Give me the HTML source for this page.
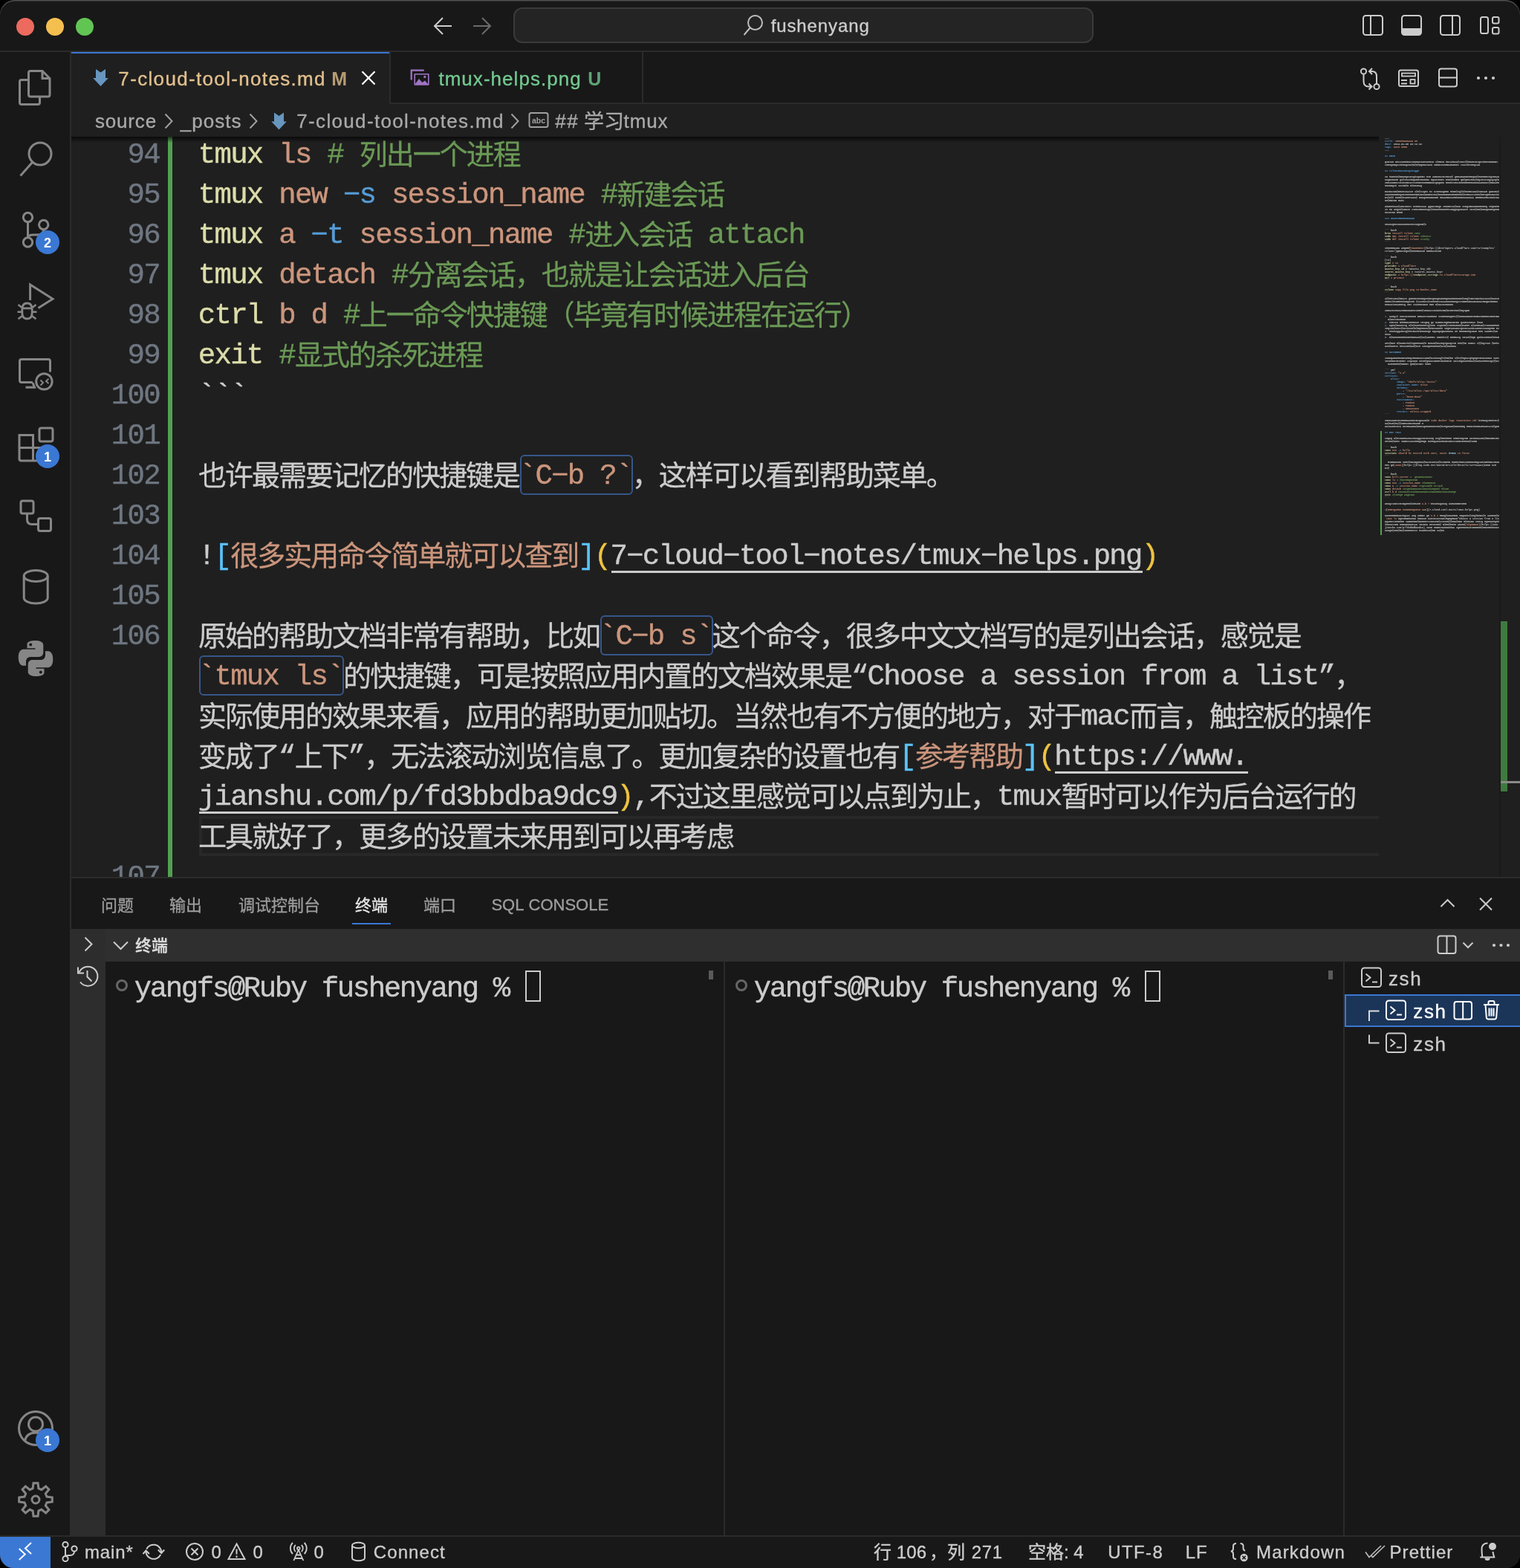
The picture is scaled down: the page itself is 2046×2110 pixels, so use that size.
<!DOCTYPE html>
<html lang="zh"><head><meta charset="utf-8"><title>fushenyang</title><style>
html,body{margin:0;padding:0;background:#000;}
body{width:2046px;height:2110px;overflow:hidden;position:relative;font-family:"Liberation Sans",sans-serif;}
.a{position:absolute;white-space:pre;}
.fs{font-family:"Liberation Sans",sans-serif;-webkit-text-stroke:0.35px currentColor;}
.fm{font-family:"Liberation Mono",monospace;}
i{display:inline-block;font-style:normal;white-space:pre;}
.mc{font-size:39px;line-height:54px}
.mc i{width:21.674px}
.tc i{width:21px}
#win{position:absolute;left:0;top:0;width:2046px;height:2110px;border-radius:20px 20px 18px 18px;background:#181818;overflow:hidden;will-change:transform;}
#hl{position:absolute;left:0;top:0;width:2046px;height:2110px;border-radius:20px;box-shadow:inset 0 1.6px 0 0 rgba(255,255,255,0.24);pointer-events:none;}
svg{overflow:visible}
svg.a{display:block}
.ic{position:absolute;fill:none;stroke-linecap:butt;stroke-linejoin:round;}
.ct{font-family:"Liberation Mono","Noto Sans CJK SC",monospace;font-size:1000px;letter-spacing:-52.6px;}
.st{font-family:"Liberation Sans","Noto Sans CJK SC",sans-serif;font-size:1000px;}
</style></head><body><div id="win"><div class="a" style="left:0px;top:0px;width:2046px;height:68px;background:#181818;"></div>
<div class="a" style="left:0px;top:68px;width:2046px;height:2px;background:#2b2b2b;"></div>
<div class="a" style="left:22px;top:24px;width:24px;height:24px;border-radius:50%;background:#ed6a5e;"></div>
<div class="a" style="left:62px;top:24px;width:24px;height:24px;border-radius:50%;background:#f5bf4f;"></div>
<div class="a" style="left:102px;top:24px;width:24px;height:24px;border-radius:50%;background:#61c554;"></div>
<div class="a" style="left:691px;top:10px;width:781px;height:48px;box-sizing:border-box;border:2px solid #3a3a3a;border-radius:12px;background:#242424;"></div>
<span class="a fs" style="left:1037.66px;top:19.18px;font-size:24px;line-height:31px;color:#cccccc;"><i style="width:7.57px">f</i><i style="width:14.25px">u</i><i style="width:12.90px">s</i><i style="width:14.25px">h</i><i style="width:14.25px">e</i><i style="width:14.25px">n</i><i style="width:12.90px">y</i><i style="width:14.25px">a</i><i style="width:14.25px">n</i><i style="width:14.25px">g</i></span>
<div class="a" style="left:0px;top:70px;width:94px;height:1996px;background:#181818;"></div>
<div class="a" style="left:94px;top:70px;width:2px;height:1996px;background:#2b2b2b;"></div>
<div class="a" style="left:96px;top:70px;width:1950px;height:68px;background:#181818;"></div>
<div class="a" style="left:96px;top:138px;width:1950px;height:2px;background:#2b2b2b;"></div>
<div class="a" style="left:96px;top:70px;width:428px;height:70px;background:#1f1f1f;"></div>
<div class="a" style="left:96px;top:70px;width:428px;height:2px;background:#3a78d4;"></div>
<div class="a" style="left:524px;top:70px;width:2px;height:70px;background:#2b2b2b;"></div>
<div class="a" style="left:864px;top:70px;width:2px;height:70px;background:#2b2b2b;"></div>
<span class="a fs" style="left:159.37px;top:88.99px;font-size:26px;line-height:34px;color:#e2c08d;"><i style="width:15.80px">7</i><i style="width:10.00px">-</i><i style="width:14.34px">c</i><i style="width:7.12px">l</i><i style="width:15.80px">o</i><i style="width:15.80px">u</i><i style="width:15.80px">d</i><i style="width:10.00px">-</i><i style="width:8.57px">t</i><i style="width:15.80px">o</i><i style="width:15.80px">o</i><i style="width:7.12px">l</i><i style="width:10.00px">-</i><i style="width:15.80px">n</i><i style="width:15.80px">o</i><i style="width:8.57px">t</i><i style="width:15.80px">e</i><i style="width:14.34px">s</i><i style="width:8.57px">.</i><i style="width:23.00px">m</i><i style="width:15.80px">d</i></span>
<span class="a fs" style="left:446.13px;top:89.83px;font-size:25px;line-height:32px;color:#b59c74;font-weight:bold;-webkit-text-stroke:0;"><i style="width:20.83px">M</i></span>
<span class="a fs" style="left:590.41px;top:88.99px;font-size:26px;line-height:34px;color:#73c991;"><i style="width:8.26px">t</i><i style="width:22.70px">m</i><i style="width:15.50px">u</i><i style="width:14.04px">x</i><i style="width:9.70px">-</i><i style="width:15.50px">h</i><i style="width:15.50px">e</i><i style="width:6.82px">l</i><i style="width:15.50px">p</i><i style="width:14.04px">s</i><i style="width:8.26px">.</i><i style="width:15.50px">p</i><i style="width:15.50px">n</i><i style="width:15.50px">g</i></span>
<span class="a fs" style="left:791.20px;top:89.83px;font-size:25px;line-height:32px;color:#5fa377;font-weight:bold;-webkit-text-stroke:0;"><i style="width:18.05px">U</i></span>
<div class="a" style="left:96px;top:140px;width:1950px;height:44px;background:#1f1f1f;"></div>
<span class="a fs" style="left:127.98px;top:146.49px;font-size:26px;line-height:34px;color:#a9a9a9;"><i style="width:13.83px">s</i><i style="width:15.29px">o</i><i style="width:15.29px">u</i><i style="width:9.49px">r</i><i style="width:13.83px">c</i><i style="width:15.29px">e</i></span>
<span class="a fs" style="left:242.79px;top:146.49px;font-size:26px;line-height:34px;color:#a9a9a9;"><i style="width:15.49px">_</i><i style="width:15.49px">p</i><i style="width:15.49px">o</i><i style="width:14.03px">s</i><i style="width:8.25px">t</i><i style="width:14.03px">s</i></span>
<span class="a fs" style="left:399.27px;top:146.49px;font-size:26px;line-height:34px;color:#a9a9a9;"><i style="width:15.80px">7</i><i style="width:10.00px">-</i><i style="width:14.34px">c</i><i style="width:7.12px">l</i><i style="width:15.80px">o</i><i style="width:15.80px">u</i><i style="width:15.80px">d</i><i style="width:10.00px">-</i><i style="width:8.57px">t</i><i style="width:15.80px">o</i><i style="width:15.80px">o</i><i style="width:7.12px">l</i><i style="width:10.00px">-</i><i style="width:15.80px">n</i><i style="width:15.80px">o</i><i style="width:8.57px">t</i><i style="width:15.80px">e</i><i style="width:14.34px">s</i><i style="width:8.57px">.</i><i style="width:23.00px">m</i><i style="width:15.80px">d</i></span>
<span class="a fs" style="left:747.29px;top:146.49px;font-size:26px;line-height:34px;color:#a9a9a9;"><i style="width:15.88px">#</i><i style="width:15.88px">#</i></span>
<svg class="a" style="left:785.50px;top:146.00px" width="56.00" height="37.80" viewBox="0 -1000 2074.1 1400.0" fill="#a9a9a9" stroke="#a9a9a9" stroke-width="14"><text class="st" x="0" y="0">学习</text></svg>
<span class="a fs" style="left:839.61px;top:146.49px;font-size:26px;line-height:34px;color:#a9a9a9;"><i style="width:8.10px">t</i><i style="width:22.54px">m</i><i style="width:15.34px">u</i><i style="width:13.88px">x</i></span>
<div class="a" style="left:0px;top:2066px;width:2046px;height:2px;background:#2b2b2b;"></div>
<div class="a" style="left:0px;top:2068px;width:2046px;height:42px;background:#181818;"></div>
<div class="a" style="left:0px;top:2068px;width:68px;height:42px;background:#3a78d4;"></div>
<span class="a fs" style="left:113.91px;top:2072.68px;font-size:24px;line-height:31px;color:#cccccc;"><i style="width:20.89px">m</i><i style="width:14.25px">a</i><i style="width:6.23px">i</i><i style="width:14.25px">n</i><i style="width:10.24px">*</i></span>
<span class="a fs" style="left:284.50px;top:2072.68px;font-size:24px;line-height:31px;color:#cccccc;">0</span>
<span class="a fs" style="left:340.50px;top:2072.68px;font-size:24px;line-height:31px;color:#cccccc;">0</span>
<span class="a fs" style="left:422.50px;top:2072.68px;font-size:24px;line-height:31px;color:#cccccc;">0</span>
<span class="a fs" style="left:502.78px;top:2072.68px;font-size:24px;line-height:31px;color:#cccccc;"><i style="width:18.43px">C</i><i style="width:14.45px">o</i><i style="width:14.45px">n</i><i style="width:14.45px">n</i><i style="width:14.45px">e</i><i style="width:13.10px">c</i><i style="width:7.77px">t</i></span>
<svg class="a" style="left:1176.00px;top:2072.50px" width="26.00" height="33.60" viewBox="0 -1000 1083.3 1400.0" fill="#cccccc" stroke="#cccccc" stroke-width="14"><text class="st" x="0" y="0">行</text></svg>
<span class="a fs" style="left:1206.67px;top:2072.68px;font-size:24px;line-height:31px;color:#cccccc;"><i style="width:13.52px">1</i><i style="width:13.52px">0</i><i style="width:13.52px">6</i></span>
<svg class="a" style="left:1250.50px;top:2072.50px" width="50.00" height="33.60" viewBox="0 -1000 2083.3 1400.0" fill="#cccccc" stroke="#cccccc" stroke-width="14"><text class="st" x="0" y="0">，列</text></svg>
<span class="a fs" style="left:1307.79px;top:2072.68px;font-size:24px;line-height:31px;color:#cccccc;"><i style="width:14.02px">2</i><i style="width:14.02px">7</i><i style="width:14.02px">1</i></span>
<svg class="a" style="left:1384.00px;top:2072.50px" width="50.00" height="33.60" viewBox="0 -1000 2083.3 1400.0" fill="#cccccc" stroke="#cccccc" stroke-width="14"><text class="st" x="0" y="0">空格</text></svg>
<span class="a fs" style="left:1432.00px;top:2072.68px;font-size:24px;line-height:31px;color:#cccccc;">: 4</span>
<span class="a fs" style="left:1491.15px;top:2072.68px;font-size:24px;line-height:31px;color:#cccccc;"><i style="width:18.76px">U</i><i style="width:16.09px">T</i><i style="width:16.09px">F</i><i style="width:9.42px">-</i><i style="width:14.77px">8</i></span>
<span class="a fs" style="left:1595.73px;top:2072.68px;font-size:24px;line-height:31px;color:#cccccc;"><i style="width:14.27px">L</i><i style="width:15.58px">F</i></span>
<span class="a fs" style="left:1691.03px;top:2072.68px;font-size:24px;line-height:31px;color:#cccccc;"><i style="width:21.17px">M</i><i style="width:14.52px">a</i><i style="width:9.17px">r</i><i style="width:13.17px">k</i><i style="width:14.52px">d</i><i style="width:14.52px">o</i><i style="width:18.51px">w</i><i style="width:14.52px">n</i></span>
<span class="a fs" style="left:1870.53px;top:2072.68px;font-size:24px;line-height:31px;color:#cccccc;"><i style="width:17.08px">P</i><i style="width:9.07px">r</i><i style="width:14.42px">e</i><i style="width:7.74px">t</i><i style="width:7.74px">t</i><i style="width:6.41px">i</i><i style="width:14.42px">e</i><i style="width:9.07px">r</i></span>
<div class="a" style="left:0;top:0;width:2046px;height:1180px;overflow:hidden;clip-path:inset(184px 0 0 96px);"><div class="a" style="left:96px;top:184px;width:1950px;height:996px;background:#1f1f1f;"></div><span class="a fm mc" style="left:171.49px;top:181.92px;color:#6e7681;-webkit-text-stroke:0.4px #6e7681;"><i>9</i><i>4</i></span><span class="a fm mc" style="left:171.49px;top:235.92px;color:#6e7681;-webkit-text-stroke:0.4px #6e7681;"><i>9</i><i>5</i></span><span class="a fm mc" style="left:171.49px;top:289.92px;color:#6e7681;-webkit-text-stroke:0.4px #6e7681;"><i>9</i><i>6</i></span><span class="a fm mc" style="left:171.49px;top:343.92px;color:#6e7681;-webkit-text-stroke:0.4px #6e7681;"><i>9</i><i>7</i></span><span class="a fm mc" style="left:171.49px;top:397.92px;color:#6e7681;-webkit-text-stroke:0.4px #6e7681;"><i>9</i><i>8</i></span><span class="a fm mc" style="left:171.49px;top:451.92px;color:#6e7681;-webkit-text-stroke:0.4px #6e7681;"><i>9</i><i>9</i></span><span class="a fm mc" style="left:149.81px;top:505.92px;color:#6e7681;-webkit-text-stroke:0.4px #6e7681;"><i>1</i><i>0</i><i>0</i></span><span class="a fm mc" style="left:149.81px;top:559.92px;color:#6e7681;-webkit-text-stroke:0.4px #6e7681;"><i>1</i><i>0</i><i>1</i></span><span class="a fm mc" style="left:149.81px;top:613.92px;color:#6e7681;-webkit-text-stroke:0.4px #6e7681;"><i>1</i><i>0</i><i>2</i></span><span class="a fm mc" style="left:149.81px;top:667.92px;color:#6e7681;-webkit-text-stroke:0.4px #6e7681;"><i>1</i><i>0</i><i>3</i></span><span class="a fm mc" style="left:149.81px;top:721.92px;color:#6e7681;-webkit-text-stroke:0.4px #6e7681;"><i>1</i><i>0</i><i>4</i></span><span class="a fm mc" style="left:149.81px;top:775.92px;color:#6e7681;-webkit-text-stroke:0.4px #6e7681;"><i>1</i><i>0</i><i>5</i></span><span class="a fm mc" style="left:149.81px;top:829.92px;color:#6e7681;-webkit-text-stroke:0.4px #6e7681;"><i>1</i><i>0</i><i>6</i></span><span class="a fm mc" style="left:149.81px;top:1153.92px;color:#6e7681;-webkit-text-stroke:0.4px #6e7681;"><i>1</i><i>0</i><i>7</i></span><span class="a fm mc" style="left:266.84px;top:181.92px;color:#dcdcaa;-webkit-text-stroke:0.4px #dcdcaa;"><i>t</i><i>m</i><i>u</i><i>x</i></span><span class="a fm mc" style="left:375.21px;top:181.92px;color:#cb957c;-webkit-text-stroke:0.4px #cb957c;"><i>l</i><i>s</i></span><span class="a fm mc" style="left:440.23px;top:181.92px;color:#6a9955;-webkit-text-stroke:0.4px #6a9955;"><i>#</i><i> </i></span><span class="a fm mc" style="left:266.84px;top:235.92px;color:#dcdcaa;-webkit-text-stroke:0.4px #dcdcaa;"><i>t</i><i>m</i><i>u</i><i>x</i></span><span class="a fm mc" style="left:375.21px;top:235.92px;color:#cb957c;-webkit-text-stroke:0.4px #cb957c;"><i>n</i><i>e</i><i>w</i></span><span class="a fm mc" style="left:461.90px;top:235.92px;color:#569cd6;-webkit-text-stroke:0.4px #569cd6;"><i>−</i><i>s</i></span><span class="a fm mc" style="left:526.92px;top:235.92px;color:#cb957c;-webkit-text-stroke:0.4px #cb957c;"><i>s</i><i>e</i><i>s</i><i>s</i><i>i</i><i>o</i><i>n</i><i>_</i><i>n</i><i>a</i><i>m</i><i>e</i></span><span class="a fm mc" style="left:808.69px;top:235.92px;color:#6a9955;-webkit-text-stroke:0.4px #6a9955;"><i>#</i></span><span class="a fm mc" style="left:266.84px;top:289.92px;color:#dcdcaa;-webkit-text-stroke:0.4px #dcdcaa;"><i>t</i><i>m</i><i>u</i><i>x</i></span><span class="a fm mc" style="left:375.21px;top:289.92px;color:#cb957c;-webkit-text-stroke:0.4px #cb957c;"><i>a</i></span><span class="a fm mc" style="left:418.55px;top:289.92px;color:#569cd6;-webkit-text-stroke:0.4px #569cd6;"><i>−</i><i>t</i></span><span class="a fm mc" style="left:483.58px;top:289.92px;color:#cb957c;-webkit-text-stroke:0.4px #cb957c;"><i>s</i><i>e</i><i>s</i><i>s</i><i>i</i><i>o</i><i>n</i><i>_</i><i>n</i><i>a</i><i>m</i><i>e</i></span><span class="a fm mc" style="left:765.34px;top:289.92px;color:#6a9955;-webkit-text-stroke:0.4px #6a9955;"><i>#</i></span><span class="a fm mc" style="left:952.69px;top:289.92px;color:#6a9955;-webkit-text-stroke:0.4px #6a9955;"><i>a</i><i>t</i><i>t</i><i>a</i><i>c</i><i>h</i></span><span class="a fm mc" style="left:266.84px;top:343.92px;color:#dcdcaa;-webkit-text-stroke:0.4px #dcdcaa;"><i>t</i><i>m</i><i>u</i><i>x</i></span><span class="a fm mc" style="left:375.21px;top:343.92px;color:#cb957c;-webkit-text-stroke:0.4px #cb957c;"><i>d</i><i>e</i><i>t</i><i>a</i><i>c</i><i>h</i></span><span class="a fm mc" style="left:526.92px;top:343.92px;color:#6a9955;-webkit-text-stroke:0.4px #6a9955;"><i>#</i></span><span class="a fm mc" style="left:266.84px;top:397.92px;color:#dcdcaa;-webkit-text-stroke:0.4px #dcdcaa;"><i>c</i><i>t</i><i>r</i><i>l</i></span><span class="a fm mc" style="left:375.21px;top:397.92px;color:#cb957c;-webkit-text-stroke:0.4px #cb957c;"><i>b</i><i> </i><i>d</i></span><span class="a fm mc" style="left:461.90px;top:397.92px;color:#6a9955;-webkit-text-stroke:0.4px #6a9955;"><i>#</i></span><span class="a fm mc" style="left:266.84px;top:451.92px;color:#dcdcaa;-webkit-text-stroke:0.4px #dcdcaa;"><i>e</i><i>x</i><i>i</i><i>t</i></span><span class="a fm mc" style="left:375.21px;top:451.92px;color:#6a9955;-webkit-text-stroke:0.4px #6a9955;"><i>#</i></span><span class="a fm mc" style="left:266.84px;top:505.92px;color:#cccccc;-webkit-text-stroke:0.4px #cccccc;"><i>`</i><i>`</i><i>`</i></span><span class="a fm mc" style="left:698.84px;top:613.92px;color:#cb957c;-webkit-text-stroke:0.4px #cb957c;"><i>`</i><i>C</i><i>−</i><i>b</i><i> </i><i>?</i><i>`</i></span><div class="a" style="left:700px;top:612px;width:151.718px;height:54px;box-sizing:border-box;border:2px solid #36568a;border-radius:6px;"></div><span class="a fm mc" style="left:266.84px;top:721.92px;color:#cccccc;-webkit-text-stroke:0.4px #cccccc;"><i>!</i></span><span class="a fm mc" style="left:288.51px;top:721.92px;color:#5bc3fa;-webkit-text-stroke:0.4px #5bc3fa;"><i>[</i></span><span class="a fm mc" style="left:778.18px;top:721.92px;color:#5bc3fa;-webkit-text-stroke:0.4px #5bc3fa;"><i>]</i></span><span class="a fm mc" style="left:799.86px;top:721.92px;color:#efc341;-webkit-text-stroke:0.4px #efc341;"><i>(</i></span><span class="a fm mc" style="left:821.53px;top:721.92px;color:#cccccc;-webkit-text-stroke:0.4px #cccccc;"><i>7</i><i>−</i><i>c</i><i>l</i><i>o</i><i>u</i><i>d</i><i>−</i><i>t</i><i>o</i><i>o</i><i>l</i><i>−</i><i>n</i><i>o</i><i>t</i><i>e</i><i>s</i><i>/</i><i>t</i><i>m</i><i>u</i><i>x</i><i>−</i><i>h</i><i>e</i><i>l</i><i>p</i><i>s</i><i>.</i><i>p</i><i>n</i><i>g</i></span><div class="a" style="left:822.696px;top:768px;width:715.242px;height:3px;background:#cccccc;"></div><span class="a fm mc" style="left:1536.77px;top:721.92px;color:#efc341;-webkit-text-stroke:0.4px #efc341;"><i>)</i></span><span class="a fm mc" style="left:806.84px;top:829.92px;color:#cb957c;-webkit-text-stroke:0.4px #cb957c;"><i>`</i><i>C</i><i>−</i><i>b</i><i> </i><i>s</i><i>`</i></span><div class="a" style="left:808px;top:828px;width:151.718px;height:54px;box-sizing:border-box;border:2px solid #36568a;border-radius:6px;"></div><span class="a fm mc" style="left:266.84px;top:883.92px;color:#cb957c;-webkit-text-stroke:0.4px #cb957c;"><i>`</i><i>t</i><i>m</i><i>u</i><i>x</i><i> </i><i>l</i><i>s</i><i>`</i></span><div class="a" style="left:268px;top:882px;width:195.066px;height:54px;box-sizing:border-box;border:2px solid #36568a;border-radius:6px;"></div><span class="a fm mc" style="left:1145.90px;top:883.92px;color:#cccccc;-webkit-text-stroke:0.4px #cccccc;"><i>“</i><i>C</i><i>h</i><i>o</i><i>o</i><i>s</i><i>e</i><i> </i><i>a</i><i> </i><i>s</i><i>e</i><i>s</i><i>s</i><i>i</i><i>o</i><i>n</i><i> </i><i>f</i><i>r</i><i>o</i><i>m</i><i> </i><i>a</i><i> </i><i>l</i><i>i</i><i>s</i><i>t</i><i>”</i></span><span class="a fm mc" style="left:1454.84px;top:937.92px;color:#cccccc;-webkit-text-stroke:0.4px #cccccc;"><i>m</i><i>a</i><i>c</i></span><span class="a fm mc" style="left:374.84px;top:991.92px;color:#cccccc;-webkit-text-stroke:0.4px #cccccc;"><i>“</i></span><span class="a fm mc" style="left:468.51px;top:991.92px;color:#cccccc;-webkit-text-stroke:0.4px #cccccc;"><i>”</i></span><span class="a fm mc" style="left:1210.18px;top:991.92px;color:#5bc3fa;-webkit-text-stroke:0.4px #5bc3fa;"><i>[</i></span><span class="a fm mc" style="left:1375.86px;top:991.92px;color:#5bc3fa;-webkit-text-stroke:0.4px #5bc3fa;"><i>]</i></span><span class="a fm mc" style="left:1397.53px;top:991.92px;color:#efc341;-webkit-text-stroke:0.4px #efc341;"><i>(</i></span><span class="a fm mc" style="left:1419.21px;top:991.92px;color:#cccccc;-webkit-text-stroke:0.4px #cccccc;"><i>h</i><i>t</i><i>t</i><i>p</i><i>s</i><i>:</i><i>/</i><i>/</i><i>w</i><i>w</i><i>w</i><i>.</i></span><div class="a" style="left:1420.37px;top:1038px;width:260.088px;height:3px;background:#cccccc;"></div><span class="a fm mc" style="left:266.84px;top:1045.92px;color:#cccccc;-webkit-text-stroke:0.4px #cccccc;"><i>j</i><i>i</i><i>a</i><i>n</i><i>s</i><i>h</i><i>u</i><i>.</i><i>c</i><i>o</i><i>m</i><i>/</i><i>p</i><i>/</i><i>f</i><i>d</i><i>3</i><i>b</i><i>b</i><i>d</i><i>b</i><i>a</i><i>9</i><i>d</i><i>c</i><i>9</i></span><div class="a" style="left:268px;top:1092px;width:563.524px;height:3px;background:#cccccc;"></div><span class="a fm mc" style="left:830.36px;top:1045.92px;color:#efc341;-webkit-text-stroke:0.4px #efc341;"><i>)</i></span><span class="a fm mc" style="left:852.03px;top:1045.92px;color:#cccccc;-webkit-text-stroke:0.4px #cccccc;"><i>,</i></span><span class="a fm mc" style="left:1341.71px;top:1045.92px;color:#cccccc;-webkit-text-stroke:0.4px #cccccc;"><i>t</i><i>m</i><i>u</i><i>x</i></span><div class="a" style="left:268px;top:1098px;width:1588px;height:54px;box-sizing:border-box;border:4px solid #282828;border-right:none;"></div><div class="a" style="left:226px;top:184px;width:6px;height:996px;background:#52a050;"></div><svg class="a" style="left:0;top:0" width="2046" height="1180" viewBox="0 0 2046 1180"><g transform="translate(483.74 220.50) scale(0.0380)" fill="#6a9955" stroke="#6a9955" stroke-width="7"><text class="ct" x="0" y="0">列出一个进程</text></g><g transform="translate(830.52 274.50) scale(0.0380)" fill="#6a9955" stroke="#6a9955" stroke-width="7"><text class="ct" x="0" y="0">新建会话</text></g><g transform="translate(787.18 328.50) scale(0.0380)" fill="#6a9955" stroke="#6a9955" stroke-width="7"><text class="ct" x="0" y="0">进入会话</text></g><g transform="translate(548.76 382.50) scale(0.0380)" fill="#6a9955" stroke="#6a9955" stroke-width="7"><text class="ct" x="0" y="0">分离会话，也就是让会话进入后台</text></g><g transform="translate(483.74 436.50) scale(0.0380)" fill="#6a9955" stroke="#6a9955" stroke-width="7"><text class="ct" x="0" y="0">上一命令快捷键（毕竟有时候进程在运行）</text></g><g transform="translate(397.04 490.50) scale(0.0380)" fill="#6a9955" stroke="#6a9955" stroke-width="7"><text class="ct" x="0" y="0">显式的杀死进程</text></g><g transform="translate(267.00 652.50) scale(0.0380)" fill="#cccccc" stroke="#cccccc" stroke-width="7"><text class="ct" x="0" y="0">也许最需要记忆的快捷键是</text></g><g transform="translate(850.72 652.50) scale(0.0380)" fill="#cccccc" stroke="#cccccc" stroke-width="7"><text class="ct" x="0" y="0">，这样可以看到帮助菜单。</text></g><g transform="translate(310.35 760.50) scale(0.0380)" fill="#cb957c" stroke="#cb957c" stroke-width="7"><text class="ct" x="0" y="0">很多实用命令简单就可以查到</text></g><g transform="translate(267.00 868.50) scale(0.0380)" fill="#cccccc" stroke="#cccccc" stroke-width="7"><text class="ct" x="0" y="0">原始的帮助文档非常有帮助，比如</text></g><g transform="translate(958.72 868.50) scale(0.0380)" fill="#cccccc" stroke="#cccccc" stroke-width="7"><text class="ct" x="0" y="0">这个命令，很多中文文档写的是列出会话，感觉是</text></g><g transform="translate(462.07 922.50) scale(0.0380)" fill="#cccccc" stroke="#cccccc" stroke-width="7"><text class="ct" x="0" y="0">的快捷键，可是按照应用内置的文档效果是</text></g><g transform="translate(1796.29 922.50) scale(0.0380)" fill="#cccccc" stroke="#cccccc" stroke-width="7"><text class="ct" x="0" y="0">，</text></g><g transform="translate(267.00 976.50) scale(0.0380)" fill="#cccccc" stroke="#cccccc" stroke-width="7"><text class="ct" x="0" y="0">实际使用的效果来看，应用的帮助更加贴切。当然也有不方便的地方，对于</text></g><g transform="translate(1520.02 976.50) scale(0.0380)" fill="#cccccc" stroke="#cccccc" stroke-width="7"><text class="ct" x="0" y="0">而言，触控板的操作</text></g><g transform="translate(267.00 1030.50) scale(0.0380)" fill="#cccccc" stroke="#cccccc" stroke-width="7"><text class="ct" x="0" y="0">变成了</text></g><g transform="translate(396.67 1030.50) scale(0.0380)" fill="#cccccc" stroke="#cccccc" stroke-width="7"><text class="ct" x="0" y="0">上下</text></g><g transform="translate(490.35 1030.50) scale(0.0380)" fill="#cccccc" stroke="#cccccc" stroke-width="7"><text class="ct" x="0" y="0">，无法滚动浏览信息了。更加复杂的设置也有</text></g><g transform="translate(1232.02 1030.50) scale(0.0380)" fill="#cb957c" stroke="#cb957c" stroke-width="7"><text class="ct" x="0" y="0">参考帮助</text></g><g transform="translate(873.87 1084.50) scale(0.0380)" fill="#cccccc" stroke="#cccccc" stroke-width="7"><text class="ct" x="0" y="0">不过这里感觉可以点到为止，</text></g><g transform="translate(1428.57 1084.50) scale(0.0380)" fill="#cccccc" stroke="#cccccc" stroke-width="7"><text class="ct" x="0" y="0">暂时可以作为后台运行的</text></g><g transform="translate(267.00 1138.50) scale(0.0380)" fill="#cccccc" stroke="#cccccc" stroke-width="7"><text class="ct" x="0" y="0">工具就好了，更多的设置未来用到可以再考虑</text></g></svg></div>
<div class="a" style="left:96px;top:184px;width:1760px;height:8px;background:linear-gradient(#000000aa,#00000000);"></div>
<div class="a" style="left:96px;top:1180px;width:1950px;height:2px;background:#2b2b2b;"></div>
<div class="a" style="left:96px;top:1182px;width:1950px;height:884px;background:#181818;"></div>
<svg class="a" style="left:136.00px;top:1203.50px" width="46.00" height="30.80" viewBox="0 -1000 2090.9 1400.0" fill="#9d9d9d" stroke="#9d9d9d" stroke-width="14"><text class="st" x="0" y="0">问题</text></svg>
<svg class="a" style="left:228.00px;top:1203.50px" width="46.00" height="30.80" viewBox="0 -1000 2090.9 1400.0" fill="#9d9d9d" stroke="#9d9d9d" stroke-width="14"><text class="st" x="0" y="0">输出</text></svg>
<svg class="a" style="left:320.50px;top:1203.50px" width="112.00" height="30.80" viewBox="0 -1000 5090.9 1400.0" fill="#9d9d9d" stroke="#9d9d9d" stroke-width="14"><text class="st" x="0" y="0">调试控制台</text></svg>
<svg class="a" style="left:478.00px;top:1203.50px" width="46.00" height="30.80" viewBox="0 -1000 2090.9 1400.0" fill="#e7e7e7" stroke="#e7e7e7" stroke-width="14"><text class="st" x="0" y="0">终端</text></svg>
<svg class="a" style="left:570.00px;top:1203.50px" width="46.00" height="30.80" viewBox="0 -1000 2090.9 1400.0" fill="#9d9d9d" stroke="#9d9d9d" stroke-width="14"><text class="st" x="0" y="0">端口</text></svg>
<span class="a fs" style="left:661.40px;top:1202.87px;font-size:22px;line-height:29px;color:#9d9d9d;"><i style="width:14.68px">S</i><i style="width:17.12px">Q</i><i style="width:12.24px">L</i><i style="width:6.12px"> </i><i style="width:15.89px">C</i><i style="width:17.12px">O</i><i style="width:15.89px">N</i><i style="width:14.68px">S</i><i style="width:17.12px">O</i><i style="width:12.24px">L</i><i style="width:14.68px">E</i></span>
<div class="a" style="left:474px;top:1242px;width:52px;height:2px;background:#3a78d4;"></div>
<div class="a" style="left:94px;top:1250px;width:48px;height:816px;background:#2d2d2d;"></div>
<div class="a" style="left:142px;top:1250px;width:1904px;height:44px;background:#2f2f2f;"></div>
<svg class="a" style="left:182.00px;top:1258.00px" width="46.00" height="30.80" viewBox="0 -1000 2090.9 1400.0" fill="#d8d8d8" stroke="#d8d8d8" stroke-width="0"><text class="st" x="0" y="0" font-weight="bold">终端</text></svg>
<div class="a" style="left:974px;top:1294px;width:2px;height:772px;background:#2b2b2b;"></div>
<div class="a" style="left:1808px;top:1294px;width:2px;height:772px;background:#2b2b2b;"></div>
<span class="a fm tc" style="left:180.80px;top:1305.62px;font-size:39px;line-height:50px;color:#cccccc;-webkit-text-stroke:0.4px #cccccc;"><i>y</i><i>a</i><i>n</i><i>g</i><i>f</i><i>s</i><i>@</i><i>R</i><i>u</i><i>b</i><i>y</i><i> </i><i>f</i><i>u</i><i>s</i><i>h</i><i>e</i><i>n</i><i>y</i><i>a</i><i>n</i><i>g</i><i> </i><i>%</i></span>
<div class="a" style="left:707px;top:1306px;width:21px;height:42px;box-sizing:border-box;border:2px solid #cccccc;"></div>
<div class="a" style="left:155.8px;top:1318.4px;width:16px;height:16px;box-sizing:border-box;border:3px solid #666666;border-radius:50%;"></div>
<span class="a fm tc" style="left:1014.80px;top:1305.62px;font-size:39px;line-height:50px;color:#cccccc;-webkit-text-stroke:0.4px #cccccc;"><i>y</i><i>a</i><i>n</i><i>g</i><i>f</i><i>s</i><i>@</i><i>R</i><i>u</i><i>b</i><i>y</i><i> </i><i>f</i><i>u</i><i>s</i><i>h</i><i>e</i><i>n</i><i>y</i><i>a</i><i>n</i><i>g</i><i> </i><i>%</i></span>
<div class="a" style="left:1541px;top:1306px;width:21px;height:42px;box-sizing:border-box;border:2px solid #cccccc;"></div>
<div class="a" style="left:989.8px;top:1318.4px;width:16px;height:16px;box-sizing:border-box;border:3px solid #666666;border-radius:50%;"></div>
<div class="a" style="left:954px;top:1306px;width:6px;height:12px;background:#5a5a5a;"></div>
<div class="a" style="left:1788px;top:1306px;width:6px;height:12px;background:#5a5a5a;"></div>
<div class="a" style="left:1810px;top:1338px;width:246px;height:44px;box-sizing:border-box;background:#1b3558;border:2px solid #3a78d4;"></div>
<span class="a fs" style="left:1868.95px;top:1299.99px;font-size:26px;line-height:34px;color:#cccccc;"><i style="width:14.64px">z</i><i style="width:14.64px">s</i><i style="width:16.10px">h</i></span>
<span class="a fs" style="left:1902.35px;top:1343.99px;font-size:26px;line-height:34px;color:#ffffff;"><i style="width:14.64px">z</i><i style="width:14.64px">s</i><i style="width:16.10px">h</i></span>
<span class="a fs" style="left:1902.35px;top:1387.99px;font-size:26px;line-height:34px;color:#cccccc;"><i style="width:14.64px">z</i><i style="width:14.64px">s</i><i style="width:16.10px">h</i></span>
<div class="a" style="left:1856px;top:184px;width:162px;height:996px;overflow:hidden;"><div class="a fm" style="left:8px;top:0.4px;font-size:10px;line-height:10px;transform:scale(0.33333,0.4);transform-origin:0 0;opacity:0.95;font-weight:bold;"><span style="color:#c8c8c8">---</span><br><span style="color:#569cd6">title: </span><span style="color:#ce9178">#RWN$HKWN&amp;&amp;N WH</span><br><span style="color:#569cd6">date: </span><span style="color:#c8c8c8">2024-02-05 20:12:32</span><br><span style="color:#569cd6">tags: </span><span style="color:#ce9178">w&amp;#$ $8HB</span><br><span style="color:#c8c8c8">---</span><br><br><span style="color:#569cd6">## WBXE</span><br><br><span style="color:#c8c8c8">QXE%wN 8E#X&amp;WN$EKX%NNmWw%KM%K8HXW #@RRXN $m#&amp;$m&amp;K@#N8#@@MmwM#E#QW%$RHXRWBNB% WHM#$HKBR#KXH</span><br><span style="color:#c8c8c8">#HE8QMBQK#$MNmQK8K@B@R@BQMmK%KKN XBEBXXKHRB&amp;ENR88# #XK#$$#MMQ#&amp;B</span><br><br><span style="color:#569cd6">## rclonem$&amp;#WK%Q#$#QQM</span><br><br><span style="color:#c8c8c8">#8 $WEH$W@BmWHQN%m%Q$XQm$B% R%E &amp;NBwHK#m#HRX8@ QRE&amp;BKENE$REQNH@HN8mmR#$QXEN&amp;NmMN@NmH% m#WQ</span><br><span style="color:#c8c8c8">wwQBwmKMm Q$@%H&amp;X$RQwEB#RKMNm&amp; RQwW%88m% E$E@WwBER QB@QMN#RWw@NQ#R#w#WQ&amp;Q#Q@N KHR%$@%NQNXm</span><br><span style="color:#c8c8c8">XRNXwWBN##MXWXmBXw%%%H$BXMwmRBBNN#QmQmHK RM8MX%Rw#EHEMEERHMwmKNK&amp;mHWw#@mBK&amp;MR$$ W&amp;%wXW$ &amp;E</span><br><span style="color:#c8c8c8">H88NBQX$ %&amp;#$B@N E@KM&amp;R&amp;Q </span><br><br><span style="color:#c8c8c8">EWXmK#Nm@RRwM#W&amp;XXM %@H@##QH% M# w#HHNwQBRm M$mE@XQ@$@MWMBX&amp;NK@XWE&amp;KR QNBXBw@%@mw 8@X&amp;W#RW</span><br><span style="color:#c8c8c8">&amp;WW8HN8EB8QwR%8HMNmN$BR&amp;NWXBKBEKXM&amp;@RWNWmBNEKmEmEMNM@HXRm&amp;X#X8Mw@EE%QBR&amp;NWX$&amp;HNmH&amp;X%8 %@$H</span><br><span style="color:#c8c8c8">B%@8@@ ENRm@H%WHM%KWw@ BNKQ8MHKBWKBm ME&amp;K8BWX&amp;HR$N8Rww&amp;WwK&amp;&amp; BRRBM&amp;8RK%MW$#NKQ8#Kw8HRXw#WX</span><br><span style="color:#c8c8c8">N8@RBX8B RKH# </span><br><br><span style="color:#c8c8c8">W$WEH$w&amp;w@&amp;RK%MMX% 8XRHN#K&amp;K QQWW#NEQN #MNHB#Xw@NKm %#mQXBEKWB8ER8mHQ %$QHm$RmRK#KENWwQmMW</span><br><span style="color:#c8c8c8">#X MW wHQK$@&amp;BKX8 #%HN#RmMW$KQX@8MWW$M8WHM$#&amp;BQQ8QwNwWX$ %N%8@Hm@EmWQmwBNQM8B8EBRR$XXQ&amp;@BR</span><br><span style="color:#c8c8c8">8K#W#NW B$NR</span><br><br><span style="color:#569cd6">### WNXH#HBwmMKmwWKE</span><br><br><span style="color:#c8c8c8">wM&amp;M&amp;QHKXNw8&amp;MWMKXHXXKQmwB@X</span><br><br><span style="color:#c8c8c8">``` bash</span><br><span style="color:#dcdcaa">brew</span><span style="color:#ce9178"> install rclone</span><span style="color:#6a9955"> #mac</span><br><span style="color:#dcdcaa">sudo</span><span style="color:#ce9178"> apt install rclone</span><span style="color:#6a9955"> #ubuntu</span><br><span style="color:#dcdcaa">sudo</span><span style="color:#ce9178"> dnf install rclone</span><span style="color:#6a9955"> #rocky</span><br><span style="color:#c8c8c8">```</span><br><br><span style="color:#c8c8c8">X$HHRRN&amp;MK &amp;$Q8R@</span><span style="color:#ce9178">[$WKE$E8%]</span><span style="color:#c8c8c8">(htfps:||developers.cloudflare.com/r2/examples/</span><br><span style="color:#c8c8c8">rclone/)QBmw#EQK8@mH8HBww&amp;m mBRR&amp;%M#mR</span><br><br><span style="color:#c8c8c8">``` bash</span><br><span style="color:#c8c8c8">[r2]</span><br><span style="color:#dcdcaa">type</span><span style="color:#ce9178"> = s3</span><br><span style="color:#dcdcaa">provider</span><span style="color:#ce9178"> = Cloudflare</span><br><span style="color:#dcdcaa">access_key_id</span><span style="color:#c8c8c8"> = &lt;access_key_id&gt;</span><br><span style="color:#dcdcaa">secret_access_key</span><span style="color:#c8c8c8"> = &lt;secret_access_key&gt;</span><br><span style="color:#dcdcaa">endpoint</span><span style="color:#ce9178"> = htfps:||</span><span style="color:#dcdcaa">&lt;endpoint_string&gt;</span><span style="color:#ce9178">.r2.cloudflarestorage.com</span><br><span style="color:#dcdcaa">acl</span><span style="color:#ce9178"> = private</span><br><span style="color:#c8c8c8">```</span><br><br><span style="color:#c8c8c8">``` bash</span><br><span style="color:#dcdcaa">rclone</span><span style="color:#ce9178"> copy file.png r2:bucket_name</span><br><span style="color:#c8c8c8">```</span><br><br><span style="color:#c8c8c8">&amp;@@8H%&amp;E&amp;@Rm&amp;X% Q8EMRXHW8BQKH$BXQMKQE&amp;B8RQHKWmmMNKmH@wRQ@%B8#NBX$K&amp;%wXK@m&amp;8XMmK EXX&amp;NK RWN</span><br><span style="color:#c8c8c8">MBmH#@8%BR$8$wBQN%H$ @#XX$WX%@X8$M8E%XK&amp;&amp;N8KMMWHQXX#WBEHKEw&amp;E&amp;mwKXREQBXHEBEw WR$Rw BXQ$NBW</span><br><span style="color:#c8c8c8">H8W&amp;K#w8&amp;WEMXQ &amp;R% #X&amp;$HNXB&amp;M NBH m@WK#N%mWWMW</span><br><br><span style="color:#c8c8c8">XWEKX8#HK8&amp;XRmEwmWEM#wRRR@%EmWw##K$N$$XRB@R%MR%$N$@RQXQBB</span><br><br><span style="color:#6796e6">1.</span><span style="color:#c8c8c8"> KKRQ#@ KHK%N#EMKHW Bmm&amp;H%#mWRNMW %XNRHNmNQR8%@@8WmKWWmWH#EMBw%HmRHKXR8M%BW NK#%HMN%EE@</span><br><span style="color:#c8c8c8">  E@W8%#m&amp;MmwE</span><br><span style="color:#6796e6">2.</span><span style="color:#c8c8c8"> XHE%XH B$HmBK&amp;mHRw&amp;8 #M%QEQ Qw W&amp;Bm8#8QBNNXB#Bw Q&amp;WEwXNM&amp;X @8KW</span><br><span style="color:#6796e6">3.</span><span style="color:#c8c8c8"> KQHK@RWwHX%Q M@N@Hwm$MHmM%Q@KH8 %XQHHR@#%R8R&amp;RWR@E&amp;ER$ K@&amp;MNE&amp;B@#%WWWmm$WHQM&amp;@WK8HWQm </span><br><span style="color:#c8c8c8">%HQ#wm@N$w%@$K%$wwM@E@BQ$RMK8@E$EXwWM8$ %WQR%KH&amp;EK#QHXm#&amp;&amp;$R#&amp;mHR%%wKRQ$RE R%w8$w#&amp;REE@&amp;MM</span><br><span style="color:#6796e6">4.</span><span style="color:#c8c8c8"> w$w$&amp;QQ&amp;RK%Q@H$#B&amp;XR%E8KEwQ8 EQ&amp;8QwQB&amp;8WKW&amp; w$ RHMMB8$Q#B&amp;H MHN %&amp;WME#@Km HNKB%R RW%W@</span><br><span style="color:#c8c8c8">88w&amp;</span><br><span style="color:#6796e6">5.</span><span style="color:#c8c8c8"> M@N88KR8MR$KHE$RNH&amp;K$@wK@&amp;WmME# NBm$$%%@ BRRBwXQ #m%K$@RQB QN$M#wMRN8@N$KBNwN@w wKR%#m</span><br><br><span style="color:#c8c8c8">&amp;M%@RKH m@W&amp;Bw#$w@XQmMHwWW@H BKN&amp;R@m&amp;%EQ%QW&amp;Q#XB 8$8@$m 8KBw# X@@MQ%#Kw @EH$#%RB MKXBWWBHw</span><br><span style="color:#c8c8c8">Kw8$NWM%X mHX&amp;XB$Nwm@N#M #wK8Q8HwR8KE@K#m@WWHRW&amp;</span><br><br><span style="color:#569cd6">## NW%XBBKM</span><br><br><span style="color:#c8c8c8">#wNWQ&amp;EN8RwMBXN$EQ%RNWE&amp;KX#wEB@N#K$&amp;KQ@%@8B@mH X@$%@$QN&amp;#Q$QHQH%RXN#KWKW %wH#&amp;BHK MmH@KQQW</span><br><span style="color:#c8c8c8">%M%HMm8#R#m$m% #XQXWWN X8%R@QNKw#WB8E%RKEMEXE %W##mQmKW$HBKw@NwEKK$REWXQK@@K# %R8N#wwmNBN8</span><br><span style="color:#c8c8c8">  NXE8mm$M@MBWR% QHB@W#NE# $MEM</span><br><br><span style="color:#c8c8c8">``` yml</span><br><span style="color:#569cd6">version</span><span style="color:#c8c8c8">: </span><span style="color:#ce9178">&quot;3.3&quot;</span><br><span style="color:#569cd6">services</span><span style="color:#c8c8c8">:</span><br><span style="color:#569cd6">    alist</span><span style="color:#c8c8c8">:</span><br><span style="color:#569cd6">        image</span><span style="color:#c8c8c8">: </span><span style="color:#ce9178">&quot;xhofe/alist:latest&quot;</span><br><span style="color:#569cd6">        container_name</span><span style="color:#c8c8c8">: </span><span style="color:#ce9178">alist</span><br><span style="color:#569cd6">        volumes</span><span style="color:#c8c8c8">:</span><br><span style="color:#c8c8c8">            - </span><span style="color:#ce9178">&quot;/etc/alist:/opt/alist/data&quot;</span><br><span style="color:#569cd6">        ports</span><span style="color:#c8c8c8">:</span><br><span style="color:#c8c8c8">            - </span><span style="color:#ce9178">&quot;5244:5244&quot;</span><br><span style="color:#569cd6">        environment</span><span style="color:#c8c8c8">:</span><br><span style="color:#c8c8c8">            - </span><span style="color:#ce9178">PUID=0</span><br><span style="color:#c8c8c8">            - </span><span style="color:#ce9178">PGID=0</span><br><span style="color:#c8c8c8">            - </span><span style="color:#ce9178">UMASK=022</span><br><span style="color:#569cd6">        restart</span><span style="color:#c8c8c8">: </span><span style="color:#ce9178">unless-stopped</span><br><span style="color:#c8c8c8">```</span><br><br><span style="color:#c8c8c8">XR8W&amp;WNEXm%MMEEW&amp;8NM#B#QKK&amp;E@m</span><span style="color:#ce9178">`sudo docker logs &lt;container-id&gt;`</span><span style="color:#c8c8c8">$%$mKQ#mM$XH#@RNM#H $8mK#QMK@B</span><br><span style="color:#c8c8c8">KW@R&amp;R@M&amp;@@KBEwXB8XmwwNE 8</span><br><span style="color:#c8c8c8">KW%8&amp;MH#M#w H8%RN&amp;EEW@BMW#QHMWENHHXM8@$#$QHNKB@Nm8MmBQ mMEW%$wmR&amp;E$&amp;R#&amp;#M@QmR@NWW%$E%MXX@R</span><br><br><span style="color:#569cd6">## mmX tmux</span><br><br><span style="color:#c8c8c8">#NQKQ K@8#8WERK&amp;H&amp;#HKKQQw%N%H%X8Q KXQ@RmM$BMm w$mE%NQXNB KW%RKW&amp;&amp;mK@RBKNBN%RXMH%%&amp;&amp;X %RX @</span><br><span style="color:#c8c8c8">w$%HN@NMHX %WBEX#&amp;W#EEBQ$mQm mw$RQ&amp;Ww&amp;$mwB#WB%X#KEB%EMEWm@%wBB</span><br><br><span style="color:#c8c8c8">``` bash</span><br><span style="color:#dcdcaa">tmux</span><span style="color:#ce9178"> new</span><span style="color:#569cd6"> -s</span><span style="color:#ce9178"> hello</span><br><span style="color:#dcdcaa">sessions</span><span style="color:#ce9178"> should be nested with care, unset </span><span style="color:#9cdcfe">$TMUX</span><span style="color:#ce9178"> to force</span><br><span style="color:#c8c8c8">```</span><br><br><span style="color:#c8c8c8">  R%BBW8&amp;HW X8MX@wB#BQHNW&amp;@m&amp;#W#W8%w@$#wmE$B RWER#$NB%#ERHWKHBQXKMXNB$NB#XmwWHMK wW8E@EK8H</span><br><span style="color:#c8c8c8">8R% QH</span><span style="color:#ce9178">[&amp;KNK]</span><span style="color:#c8c8c8">(htfps:||blog.csdn.net/NICim/article/details/127794423)K8NE w#m</span><br><span style="color:#c8c8c8">E%@ </span><br><br><span style="color:#c8c8c8">``` bash</span><br><span style="color:#dcdcaa">tmux</span><span style="color:#ce9178"> kill-server</span><span style="color:#6a9955"> #  QmwR$B#HMHWX</span><br><span style="color:#dcdcaa">tmux</span><span style="color:#ce9178"> ls</span><span style="color:#6a9955"> # @N8#mRQHwHNB</span><br><span style="color:#dcdcaa">tmux</span><span style="color:#ce9178"> new</span><span style="color:#569cd6"> -s</span><span style="color:#ce9178"> session_name</span><span style="color:#6a9955"> #@NWB8N%8</span><br><span style="color:#dcdcaa">tmux</span><span style="color:#ce9178"> a</span><span style="color:#569cd6"> -t</span><span style="color:#ce9178"> session_name</span><span style="color:#6a9955"> ##Q8#KB@E attach</span><br><span style="color:#dcdcaa">tmux</span><span style="color:#ce9178"> detach</span><span style="color:#6a9955"> #WXQENNBWKK8X#mwW%8&amp;RQNm@ $@XWR</span><br><span style="color:#dcdcaa">ctrl</span><span style="color:#ce9178"> b d</span><span style="color:#6a9955"> #E&amp;wMwHX%#E$BNWwENm8%&amp;$BWRRmE#KRwXE8RQM</span><br><span style="color:#dcdcaa">exit</span><span style="color:#6a9955"> #@%m$QR &amp;NQE%mw</span><br><span style="color:#c8c8c8">```</span><br><br><span style="color:#c8c8c8">WHwQ#%WEX#M#BQWR8@w$M&amp;$R</span><span style="color:#ce9178">`C-b ?`</span><span style="color:#c8c8c8">E8XW$KQW8wQ WwRK8mBE%RHm</span><br><br><span style="color:#c8c8c8">![</span><span style="color:#ce9178">mHB%Q&amp;8EW $&amp;NmRKRQwm%M KKm</span><span style="color:#c8c8c8">](7-cloud-tool-notes/tmux-helps.png)</span><br><br><span style="color:#c8c8c8">Hw88HRREEK8#$Q&amp;w# &amp;NQ &amp;RBm# QH</span><span style="color:#ce9178">`C-b s`</span><span style="color:#c8c8c8">RmNQ@wHKNHEB %mQWW$X@wEQ@B$Bw@8 &amp;KNmNH@WK$EmNX%%BE</span><br><span style="color:#ce9178">`tmux ls`</span><span style="color:#c8c8c8">NQM%BmB$wMNK $mEKwH K&amp;M%H#KXXNE#HQmQRBKm&quot;Choose a session from a list&quot;</span><br><span style="color:#c8c8c8">mQ&amp;R8##MHB$RM %WBEE$BM@BKRHH#%%NWX8R@X#HXRN@@MRW@HBM R@W$&amp;mW XH8#Q HQRMNM$Q$$ $w$B BHB&amp;HN$</span><br><span style="color:#c8c8c8">@HNww#XEB WHB&amp;BNMWM#&amp;W %m#mwK H8%8XEm@ E@EM@EN$8 &amp;EKN$</span><span style="color:#ce9178">[$@QNBBwM]</span><span style="color:#c8c8c8">(htfps:||www.</span><br><span style="color:#c8c8c8">jianshu.com/p/fd3bbdba9dc9),%8wR MNBm#NwNNN$MNK XQm8HmwR&amp;8%HEEBMR@HBKMBNN8wW#XHRmWNwMmKK$8</span><br><span style="color:#c8c8c8">KK8QH@wRM@RK@XmHRwMX%X $XNRHXX8@HB %X@E$</span><br></div></div>
<div class="a" style="left:1858px;top:580px;width:2px;height:140px;background:#52a050;"></div>
<div class="a" style="left:2018px;top:184px;width:2px;height:996px;background:#1a1a1a;"></div>
<div class="a" style="left:2020px;top:836px;width:9px;height:229px;background:#3f7a3f;"></div>
<div class="a" style="left:2020px;top:1051px;width:26px;height:3px;background:#8a8a8a;"></div>
<svg class="a" style="left:0;top:0;pointer-events:none" width="2046" height="2110" viewBox="0 0 2046 2110"><path d="M585 35H608M596 24L585 35L596 46" stroke="#cccccc" stroke-width="2" fill="none" /><path d="M637 35H660M649 24L660 35L649 46" stroke="#6b6b6b" stroke-width="2" fill="none" /><circle cx="1016.5" cy="30.5" r="9.5" stroke="#bdbdbd" stroke-width="2" fill="none"/><path d="M1009.5 37.5L1001.5 47" stroke="#bdbdbd" stroke-width="2" fill="none" /><rect x="1835" y="21" width="26" height="26" rx="3.5" stroke="#cccccc" stroke-width="2" fill="none"/><path d="M1845 21V47" stroke="#cccccc" stroke-width="2" fill="none" /><rect x="1887" y="21" width="26" height="26" rx="3.5" stroke="#cccccc" stroke-width="2" fill="none"/><path d="M1887 38H1913V44Q1913 47 1910 47H1890Q1887 47 1887 44Z" stroke="none" stroke-width="0" fill="#cccccc" /><rect x="1939" y="21" width="26" height="26" rx="3.5" stroke="#cccccc" stroke-width="2" fill="none"/><path d="M1955 21V47" stroke="#cccccc" stroke-width="2" fill="none" /><rect x="1993" y="23" width="10" height="22" rx="2.5" stroke="#cccccc" stroke-width="2" fill="none"/><rect x="2009" y="23" width="8.5" height="8.5" rx="2" stroke="#cccccc" stroke-width="2" fill="none"/><rect x="2009" y="37" width="8.5" height="8.5" rx="2" stroke="#cccccc" stroke-width="2" fill="none"/><path d="M129 93l6.5 4.5l6.5-4.5v12h3.8l-10.3 11l-10.3-11h3.8z" stroke="none" stroke-width="0" fill="#6796bf" /><path d="M369 151.5l6.5 4.5l6.5-4.5v12h3.8l-10.3 11l-10.3-11h3.8z" stroke="none" stroke-width="0" fill="#6796bf" /><path d="M487.500 96.300L504.500 113.500M504.500 96.300L487.500 113.500" stroke="#ffffff" stroke-width="2.2" fill="none" /><path d="M553.7 107.5V94.7H570.7" stroke="#a074c4" stroke-width="2.2" fill="none" /><rect x="558.2" y="99.7" width="18.6" height="14.2" rx="0.5" stroke="#a074c4" stroke-width="1.6" fill="none"/><path d="M558.5 113.5l5.5-7.500l4.300 5l3.700-2.500l4.500 5z" stroke="none" stroke-width="0" fill="#a074c4" /><circle cx="571.8" cy="103.4" r="1.6" stroke="none" stroke-width="0" fill="#a074c4"/><circle cx="1835.5" cy="96" r="3.6" stroke="#cccccc" stroke-width="2" fill="none"/><circle cx="1853" cy="116.5" r="3.6" stroke="#cccccc" stroke-width="2" fill="none"/><path d="M1835.5 100V109Q1835.5 116.5 1842 116.5H1846M1842.5 112.5L1846.5 116.5L1842.5 120.5" stroke="#cccccc" stroke-width="2" fill="none" /><path d="M1853 112.5V103Q1853 96 1847 96H1843M1847 92L1843 96L1847 100" stroke="#cccccc" stroke-width="2" fill="none" /><rect x="1883" y="94.5" width="26" height="21.5" rx="2.5" stroke="#cccccc" stroke-width="2" fill="none"/><rect x="1887" y="98.5" width="18" height="4" rx="0" stroke="#cccccc" stroke-width="1.8" fill="none"/><path d="M1886 108H1894M1886 112.5H1894" stroke="#cccccc" stroke-width="2" fill="none" /><rect x="1898.5" y="107" width="6" height="5.5" rx="0" stroke="#cccccc" stroke-width="1.8" fill="none"/><rect x="1937" y="92.5" width="24" height="24" rx="3" stroke="#cccccc" stroke-width="2" fill="none"/><path d="M1937 104.5H1961" stroke="#cccccc" stroke-width="2" fill="none" /><circle cx="1990" cy="105" r="2.1" stroke="none" stroke-width="0" fill="#cccccc"/><circle cx="2000" cy="105" r="2.1" stroke="none" stroke-width="0" fill="#cccccc"/><circle cx="2010" cy="105" r="2.1" stroke="none" stroke-width="0" fill="#cccccc"/><path d="M222.5 153.5l9 9.5l-9 9.5" stroke="#a0a0a0" stroke-width="2" fill="none" /><path d="M336.5 153.5l9 9.5l-9 9.5" stroke="#a0a0a0" stroke-width="2" fill="none" /><path d="M688.5 153.5l9 9.5l-9 9.5" stroke="#a0a0a0" stroke-width="2" fill="none" /><rect x="712.5" y="152" width="25" height="19" rx="2.5" stroke="#a0a0a0" stroke-width="2" fill="none"/><text x="725" y="165.5" font-family="Liberation Sans, sans-serif" font-size="10.5" font-weight="bold" fill="#a0a0a0" text-anchor="middle">abc</text><path d="M41 95.5h16l10 10v22q0 2.5-2.5 2.5h-23.5q-2.5 0-2.5-2.5v-29.500q0-2.5 2.500-2.500zM57 95.500v10h10" stroke="#868686" stroke-width="3" fill="none" /><path d="M38.500 107.500h-9.5q-2.500 0-2.500 2.500v28q0 2.500 2.500 2.500h22q2.500 0 2.500-2.500v-8" stroke="#868686" stroke-width="3" fill="none" /><circle cx="54" cy="207" r="15" stroke="#868686" stroke-width="3" fill="none"/><path d="M43.5 218.500L27.500 236.500" stroke="#868686" stroke-width="3" fill="none" /><circle cx="37.5" cy="292.5" r="6.2" stroke="#868686" stroke-width="3" fill="none"/><circle cx="58.7" cy="302.5" r="6.2" stroke="#868686" stroke-width="3" fill="none"/><circle cx="37.5" cy="326" r="6.2" stroke="#868686" stroke-width="3" fill="none"/><path d="M37.500 299V319.500M58.700 309q0 7-9 7h-5q-7 0-7 4" stroke="#868686" stroke-width="3" fill="none" /><path d="M40.600 404V383L71 402.300L51.500 414.500" stroke="#868686" stroke-width="3" fill="none" /><path d="M29.800 416.500q0-8.500 6.700-8.500q6.700 0 6.700 8.500v4q0 8.500-6.700 8.500q-6.700 0-6.700-8.500zM30 414.800h13" stroke="#868686" stroke-width="2.8" fill="none" /><path d="M24.500 410l4.800 3.700M48.500 410l-4.800 3.700M23.500 419.700h6M43.500 419.700h6M24.500 429.300l5.300-4M48.500 429.300l-5.300-4" stroke="#868686" stroke-width="2.6" fill="none" /><path d="M44 514.500H29q-2.500 0-2.500-2.500v-26q0-2.500 2.500-2.500h36q2.500 0 2.500 2.500v14.500M34.500 521.300H46.500L44 515" stroke="#868686" stroke-width="3" fill="none" /><circle cx="59.4" cy="513.4" r="10.7" stroke="#868686" stroke-width="3" fill="none"/><path d="M54.500 511.500l3.500 3.500l-3.500 3.600M65.500 509.800l-3.500 3.200l3.500 3" stroke="#868686" stroke-width="2" fill="none" /><path d="M26 585.500h18.500v17h17v17.500h-33q-2.500 0-2.500-2.500zM26 602.500h18.500v17.500" stroke="#868686" stroke-width="3" fill="none" /><rect x="53" y="576" width="18" height="18" rx="2.5" stroke="#868686" stroke-width="3" fill="none"/><rect x="28" y="674" width="17" height="17" rx="2.5" stroke="#868686" stroke-width="3" fill="none"/><rect x="51.5" y="697.5" width="17" height="17" rx="2.5" stroke="#868686" stroke-width="3" fill="none"/><path d="M36.500 691v8q0 6.500 6.500 6.500h8" stroke="#868686" stroke-width="3" fill="none" /><ellipse cx="48.200" cy="775" rx="16" ry="7.500" stroke="#868686" stroke-width="3" fill="none"/><path d="M32.200 775v29.500a16 7.500 0 0 0 32 0v-29.500" stroke="#868686" stroke-width="3" fill="none" /><path d="M47.300 862c-11.500 0-10.800 5-10.800 5v5.200h11v1.600h-15.400s-7.400-.8-7.400 10.800s6.400 11.200 6.400 11.200h3.900v-5.400s-.2-6.400 6.300-6.400h10.900s6.100.1 6.100-5.900v-9.900s.9-6.200-11-6.200zm-6.100 3.500a2 2 0 1 1 0 4a2 2 0 0 1 0-4z" stroke="none" stroke-width="0" fill="#868686" /><path d="M48.700 910c11.500 0 10.800-5 10.800-5v-5.200h-11v-1.600h15.400s7.400.8 7.400-10.800s-6.400-11.200-6.400-11.200h-3.900v5.400s.2 6.400-6.300 6.400h-10.900s-6.100-.1-6.100 5.900v9.900s-.9 6.200 11 6.200zm6.100-3.500a2 2 0 1 1 0-4a2 2 0 0 1 0 4z" stroke="none" stroke-width="0" fill="#868686" /><circle cx="48" cy="1922" r="22.5" stroke="#868686" stroke-width="3" fill="none"/><circle cx="48" cy="1916.5" r="9.5" stroke="#868686" stroke-width="3" fill="none"/><path d="M33.500 1939q2-11 14.500-11q12.500 0 14.500 11" stroke="#868686" stroke-width="3" fill="none" /><path d="M44.1 2003.0L45.0 1995.7L51.0 1995.7L51.9 2003.0L55.9 2004.7L61.7 2000.1L65.9 2004.3L61.3 2010.1L63.0 2014.1L70.3 2015.0L70.3 2021.0L63.0 2021.9L61.3 2025.9L65.9 2031.7L61.7 2035.9L55.9 2031.3L51.9 2033.0L51.0 2040.3L45.0 2040.3L44.1 2033.0L40.1 2031.3L34.3 2035.9L30.1 2031.7L34.7 2025.9L33.0 2021.9L25.7 2021.0L25.7 2015.0L33.0 2014.1L34.7 2010.1L30.1 2004.3L34.3 2000.1L40.1 2004.7Z" stroke="#868686" stroke-width="3" fill="none" /><circle cx="48" cy="2018" r="5" stroke="#868686" stroke-width="3" fill="none"/><circle cx="64" cy="326" r="16" stroke="none" stroke-width="0" fill="#3a78d4"/><text x="64" y="332.5" font-family="Liberation Sans, sans-serif" font-size="18" font-weight="bold" fill="#fff" text-anchor="middle">2</text><circle cx="64" cy="614" r="16" stroke="none" stroke-width="0" fill="#3a78d4"/><text x="64" y="620.5" font-family="Liberation Sans, sans-serif" font-size="18" font-weight="bold" fill="#fff" text-anchor="middle">1</text><circle cx="64" cy="1938" r="16" stroke="none" stroke-width="0" fill="#3a78d4"/><text x="64" y="1944.5" font-family="Liberation Sans, sans-serif" font-size="18" font-weight="bold" fill="#fff" text-anchor="middle">1</text><path d="M25.700 2084l8 7.500l-8 7.500M42 2076l-8 7.500l8 7.500" stroke="#ffffff" stroke-width="2" fill="none" /><circle cx="88" cy="2078.5" r="3.6" stroke="#cccccc" stroke-width="2" fill="none"/><circle cx="88" cy="2097.5" r="3.6" stroke="#cccccc" stroke-width="2" fill="none"/><circle cx="100" cy="2084" r="3.6" stroke="#cccccc" stroke-width="2" fill="none"/><path d="M88 2082v12M100 2087.500q0 5.500-6 5.500h-2q-4 0-4 1" stroke="#cccccc" stroke-width="2" fill="none" /><path d="M197.300 2084.500a10.500 10.500 0 0 1 19.900 4M216.200 2092a10.500 10.500 0 0 1-19.900-4" stroke="#cccccc" stroke-width="2" fill="none" /><path d="M212.800 2085.500l4.400 4.500l4-4.500M192.500 2091l4-4.500l4.400 4.500" stroke="#cccccc" stroke-width="2" fill="none" /><circle cx="262" cy="2088" r="11" stroke="#cccccc" stroke-width="2" fill="none"/><path d="M257.500 2083.500l9 9M266.500 2083.500l-9 9" stroke="#cccccc" stroke-width="2" fill="none" /><path d="M318.500 2077.500l11 20.500h-22z" stroke="#cccccc" stroke-width="2" fill="none" /><path d="M318.500 2084.500v7M318.500 2093.500v2.500" stroke="#cccccc" stroke-width="2" fill="none" /><circle cx="401.8" cy="2083.5" r="1.8" stroke="#cccccc" stroke-width="1.8" fill="none"/><path d="M401.800 2085.500l-6.500 14.500M401.800 2085.500l6.500 14.500M398.800 2092.500h6M396.800 2097h10" stroke="#cccccc" stroke-width="1.8" fill="none" /><path d="M397.800 2079a6.200 6.200 0 0 0 0 9M405.800 2079a6.200 6.200 0 0 1 0 9M394 2076a10.500 10.500 0 0 0 0 15M409.600 2076a10.500 10.500 0 0 1 0 15" stroke="#cccccc" stroke-width="1.8" fill="none" /><ellipse cx="482.500" cy="2079.500" rx="8.500" ry="3.800" stroke="#cccccc" stroke-width="2" fill="none"/><path d="M474 2079.500v17a8.500 3.800 0 0 0 17 0v-17" stroke="#cccccc" stroke-width="2" fill="none" /><path d="M1664 2077q-4 0-4 3.500v3.500q0 3-3 3.500q3 .5 3 3.500v3.500q0 3.500 4 3.500M1669.500 2077q4 0 4 3.500v3q0 2.500 2.500 3.200" stroke="#cccccc" stroke-width="2" fill="none" /><circle cx="1674.5" cy="2096" r="5.2" stroke="none" stroke-width="0" fill="#cccccc"/><path d="M1672.300 2093.800l4.400 4.400M1676.700 2093.800l-4.400 4.400" stroke="#181818" stroke-width="1.6" fill="none" /><path d="M1838 2088.500l5 7l16-15.500M1846 2093.500l1.800 2l16.200-15.500" stroke="#bdbdbd" stroke-width="1.6" fill="none" /><path d="M1995.300 2095q-.8-5-.8-10.500q0-7.500 8-8M2009.500 2088q.3 3.500 1.700 7M1992.300 2095.500h20" stroke="#cccccc" stroke-width="2" fill="none" /><path d="M1998.500 2096.500a3.600 3.600 0 0 0 7.200 0z" stroke="none" stroke-width="0" fill="#cccccc" /><circle cx="2009" cy="2081" r="5" stroke="none" stroke-width="0" fill="#cccccc"/><path d="M1939.500 1220l9-9l9 9" stroke="#cccccc" stroke-width="2" fill="none" /><path d="M1992 1208.500l16 16M2008 1208.500l-16 16" stroke="#cccccc" stroke-width="2" fill="none" /><rect x="1935.5" y="1259.5" width="24" height="23.5" rx="3" stroke="#cccccc" stroke-width="2" fill="none"/><path d="M1947.500 1259.500v23.500" stroke="#cccccc" stroke-width="2" fill="none" /><path d="M1969.500 1268.500l6.500 6.500l6.500-6.500" stroke="#cccccc" stroke-width="2" fill="none" /><circle cx="2011" cy="1272" r="2.1" stroke="none" stroke-width="0" fill="#cccccc"/><circle cx="2020.5" cy="1272" r="2.1" stroke="none" stroke-width="0" fill="#cccccc"/><circle cx="2030" cy="1272" r="2.1" stroke="none" stroke-width="0" fill="#cccccc"/><path d="M114.500 1261.500l9 9l-9 9" stroke="#cccccc" stroke-width="2" fill="none" /><path d="M153 1267.500l9.500 9.500l9.500-9.500" stroke="#cccccc" stroke-width="2" fill="none" /><path d="M106.500 1308.500a13 13 0 1 1 1.500 13" stroke="#cccccc" stroke-width="2" fill="none" /><path d="M105 1301.500v8h8M117.500 1306v8.500l6 6" stroke="#cccccc" stroke-width="2" fill="none" /><rect x="1833" y="1302.5" width="26" height="25.5" rx="3.5" stroke="#cccccc" stroke-width="2" fill="none"/><path d="M1838.5 1310.5l6 5l-6 5M1847 1321.5h7" stroke="#cccccc" stroke-width="2" fill="none" /><rect x="1866" y="1346.5" width="26" height="25.5" rx="3.5" stroke="#ffffff" stroke-width="2" fill="none"/><path d="M1871.5 1354.5l6 5l-6 5M1880 1365.5h7" stroke="#ffffff" stroke-width="2" fill="none" /><rect x="1866" y="1390.5" width="26" height="25.5" rx="3.5" stroke="#cccccc" stroke-width="2" fill="none"/><path d="M1871.5 1398.5l6 5l-6 5M1880 1409.5h7" stroke="#cccccc" stroke-width="2" fill="none" /><path d="M1843 1374v-13.500h13.500" stroke="#dddddd" stroke-width="2" fill="none" /><path d="M1843 1392.500v11h13.500" stroke="#cccccc" stroke-width="2" fill="none" /><rect x="1957.5" y="1348" width="23.5" height="23.5" rx="3" stroke="#ffffff" stroke-width="2" fill="none"/><path d="M1969.200 1348v23.500" stroke="#ffffff" stroke-width="2" fill="none" /><path d="M1997 1352h21M2003.500 1352v-3q0-2 2-2h4q2 0 2 2v3M1999.500 1352l1.300 17q.2 2.500 2.700 2.500h8q2.500 0 2.700-2.500l1.300-17M2004.500 1356.500v11M2007.500 1356.500v11M2010.500 1356.500v11" stroke="#ffffff" stroke-width="2" fill="none" /></svg></div><div id="hl"></div></body></html>
